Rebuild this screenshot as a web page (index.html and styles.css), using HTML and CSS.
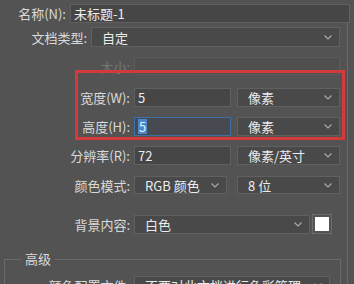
FILE: index.html
```html
<!DOCTYPE html>
<html lang="zh">
<head>
<meta charset="utf-8">
<link rel="stylesheet" href="styles.css">
</head>
<body>
<div class="dialog">
  <div class="row r1">
    <span class="lbl w-name">名称(N):</span>
    <div class="field text w-namefield">未标题-1</div>
  </div>
  <div class="panel">
    <div class="row r2">
      <span class="lbl w-type">文档类型:</span>
      <div class="field select w-typefield"><span>自定</span><svg class="chev" viewBox="0 0 8 5"><path d="M0.5 0.5 L4 4 L7.5 0.5"/></svg></div>
    </div>
    <div class="row r3">
      <span class="lbl w-main dim">大小:</span>
      <div class="field disabled w-size"></div>
    </div>
    <div class="row r4">
      <span class="lbl w-main">宽度(W):</span>
      <div class="field text w-num">5</div>
      <div class="field select w-unit"><span>像素</span><svg class="chev" viewBox="0 0 8 5"><path d="M0.5 0.5 L4 4 L7.5 0.5"/></svg></div>
    </div>
    <div class="row r5">
      <span class="lbl w-main">高度(H):</span>
      <div class="field text w-num focus"><span class="sel">5</span></div>
      <div class="field select w-unit"><span>像素</span><svg class="chev" viewBox="0 0 8 5"><path d="M0.5 0.5 L4 4 L7.5 0.5"/></svg></div>
    </div>
    <div class="row r6">
      <span class="lbl w-main">分辨率(R):</span>
      <div class="field text w-num">72</div>
      <div class="field select w-unit"><span>像素/英寸</span><svg class="chev" viewBox="0 0 8 5"><path d="M0.5 0.5 L4 4 L7.5 0.5"/></svg></div>
    </div>
    <div class="row r7">
      <span class="lbl w-main">颜色模式:</span>
      <div class="field select w-mode"><span>RGB 颜色</span><svg class="chev" viewBox="0 0 8 5"><path d="M0.5 0.5 L4 4 L7.5 0.5"/></svg></div>
      <div class="field select w-unit"><span>8 位</span><svg class="chev" viewBox="0 0 8 5"><path d="M0.5 0.5 L4 4 L7.5 0.5"/></svg></div>
    </div>
    <div class="row r8">
      <span class="lbl w-main">背景内容:</span>
      <div class="field select w-bg"><span>白色</span><svg class="chev" viewBox="0 0 8 5"><path d="M0.5 0.5 L4 4 L7.5 0.5"/></svg></div>
      <div class="swatch"><div class="swatch-in"></div></div>
    </div>
    <fieldset class="adv">
      <legend>高级</legend>
      <div class="row r9">
        <span class="lbl w-adv">颜色配置文件:</span>
        <div class="field select w-prof"><span>不要对此文档进行色彩管理</span><svg class="chev" viewBox="0 0 8 5"><path d="M0.5 0.5 L4 4 L7.5 0.5"/></svg></div>
      </div>
    </fieldset>
  </div>
  <div class="annot"></div>
</div>
</body>
</html>
```
FILE: styles.css
```css
html, body {
  margin: 0;
  padding: 0;
  background: #535353;
}
body {
  width: 354px;
  height: 284px;
  overflow: hidden;
  font-family: "Noto Sans CJK SC", "Noto Sans", sans-serif;
  font-size: 13px;
  line-height: 1;
  color: #d8d8d8;
}
.dialog {
  position: relative;
  width: 354px;
  height: 284px;
  display: flex;
  flex-direction: column;
}
.panel {
  width: 347px;
  border-right: 1px solid #686868;
  flex: 1;
  display: flex;
  flex-direction: column;
}
.row {
  display: flex;
  align-items: center;
  gap: 4px;
}
.lbl {
  flex: none;
  text-align: right;
  color: #dadada;
  white-space: nowrap;
}
.lbl.dim { color: #787878; }
.w-name { width: 66px; }
.w-type { width: 87px; }
.w-main { width: 130px; }
.w-adv { width: 125px; }

.field {
  box-sizing: border-box;
  height: 19px;
  flex: none;
  display: flex;
  align-items: center;
  background: #464646;
  border: 1px solid #606060;
  color: #ececec;
  white-space: nowrap;
  overflow: hidden;
}
.text { padding-left: 3px; }
.select {
  justify-content: space-between;
  padding: 0 7px 0 10px;
  background: #494949;
}
.chev {
  width: 8px;
  height: 5px;
  fill: none;
  stroke: #a8a8a8;
  stroke-width: 1.2;
  flex: none;
}
.disabled {
  background: #4f4f4f;
  border-color: #5b5b5b;
  height: 18px;
}
.focus {
  border-color: #3f6fa6;
  background: #474a50;
}
.sel {
  background: #4b86cc;
  color: #dff0ff;
  padding: 1px 1px;
}

.r1 { margin-top: 4px; height: 19px; }
.r2 { margin-top: 4px; height: 20px; }
.r2 .field { height: 20px; }
.r3 { margin-top: 10px; }
.r4 { margin-top: 13px; }
.r5 { margin-top: 10px; }
.r6 { margin-top: 10px; }
.r7 { margin-top: 11px; }
.r7 .field { height: 18px; }
.r8 { margin-top: 20px; }
.r9 { margin-top: 8px; }

.w-namefield { width: 280px; }
.w-typefield { width: 249px; }
.w-size { width: 206px; }
.w-num { width: 97px; }
.w-unit { width: 103px; margin-left: 2px; }
.w-mode { width: 93px; }
.r7 .w-unit { margin-left: 6px; }
.w-bg { width: 176px; }
.w-prof { width: 196px; }

.swatch {
  box-sizing: border-box;
  width: 20px;
  height: 20px;
  margin-left: -2px;
  border: 1px solid #6a6a6a;
  padding: 2px;
  display: flex;
}
.swatch-in {
  flex: 1;
  background: #ffffff;
}

.adv {
  margin: 16px 0 0 4px;
  padding: 0;
  width: 337px;
  box-sizing: border-box;
  border: 1px solid #6a6a6a;
  border-bottom: none;
  min-width: 0;
}
.adv legend {
  margin-left: 16px;
  padding: 0 4px;
  line-height: 18px;
  color: #dadada;
}
.adv .w-adv { width: 125px; }

.annot {
  position: absolute;
  left: 75px;
  top: 70px;
  width: 270px;
  height: 70px;
  box-sizing: border-box;
  border: 3px solid #d43a3c;
}
```
